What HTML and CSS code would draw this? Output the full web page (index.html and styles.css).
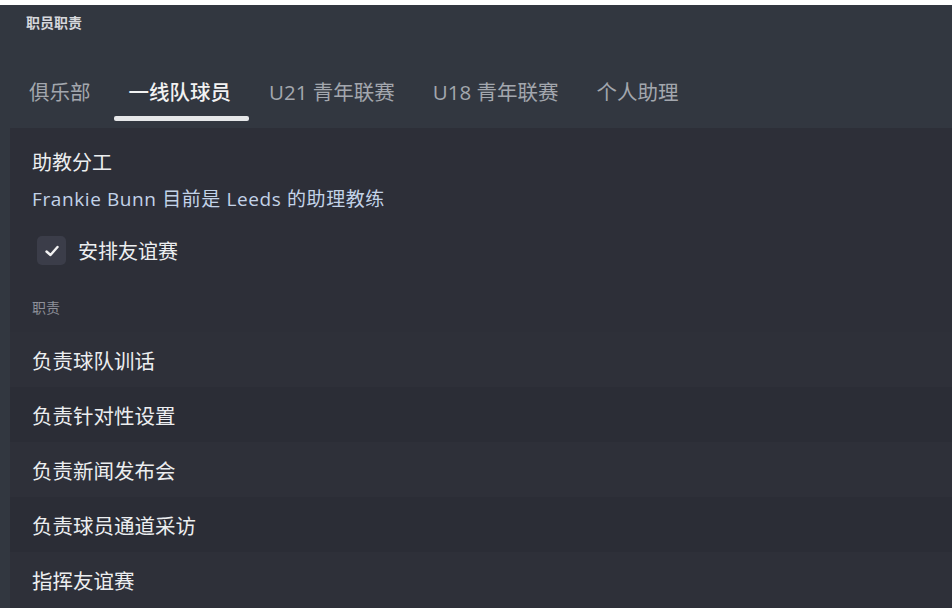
FILE: index.html
```html
<!DOCTYPE html>
<html lang="zh-CN">
<head>
    <meta charset="UTF-8">
    <meta name="viewport" content="width=device-width, initial-scale=1.0">
    <title>职员职责</title>
    <link rel="stylesheet" href="styles.css">
</head>
<body>
    <div class="top-strip"></div>
    <div class="app">
        <header class="header">
            <div class="page-title">职员职责</div>
            <nav class="tabs">
                <div class="tab">俱乐部</div>
                <div class="tab active">一线队球员</div>
                <div class="tab">U21 青年联赛</div>
                <div class="tab">U18 青年联赛</div>
                <div class="tab">个人助理</div>
            </nav>
        </header>

        <main class="panel">
            <section class="assign">
                <h2 class="assign-title">助教分工</h2>
                <p class="assign-info">Frankie Bunn 目前是 Leeds 的助理教练</p>
                <label class="check-row">
                    <span class="checkbox">
                        <svg width="18" height="18" viewBox="0 0 18 18">
                            <path d="M3.5 9.5 L7.5 13 L14.5 5" fill="none" stroke="#f2f2f2" stroke-width="2.4" stroke-linecap="round" stroke-linejoin="round"/>
                        </svg>
                    </span>
                    <span>安排友谊赛</span>
                </label>
            </section>

            <div class="section-label">职责</div>
            <ul class="duties">
                <li>负责球队训话</li>
                <li>负责针对性设置</li>
                <li>负责新闻发布会</li>
                <li>负责球员通道采访</li>
                <li>指挥友谊赛</li>
            </ul>
        </main>
    </div>
</body>
</html>
```

FILE: styles.css
```css
* {
    box-sizing: border-box;
}
body {
    margin: 0;
    background-color: #ffffff;
    font-family: "Open Sans", "Noto Sans CJK SC", sans-serif;
    color: #e4e5e8;
    height: 608px;
    overflow: hidden;
}
.top-strip {
    height: 5px;
    background: #ffffff;
}
.app {
    background-color: #323740;
    height: 603px;
    display: flex;
    flex-direction: column;
}
.header {
    height: 123px;
    display: flex;
    flex-direction: column;
}
.page-title {
    font-family: "Noto Sans CJK SC", sans-serif;
    font-size: 14px;
    font-weight: bold;
    color: #d6d8dc;
    padding: 7px 0 0 26px;
    height: 55px;
}
.tabs {
    display: flex;
    padding-left: 10px;
    height: 68px;
}
.tab {
    position: relative;
    padding: 16px 19px 0;
    font-size: 20.5px;
    color: #a3a7ae;
}
.tab.active {
    color: #f2f2f2;
    font-weight: 500;
}
.tab.active::after {
    content: "";
    position: absolute;
    left: 4px;
    right: 1px;
    bottom: 7px;
    height: 5px;
    border-radius: 2px;
    background: #e6e7e9;
}
.panel {
    flex: 1;
    margin-left: 10px;
    background-color: #2d2f38;
    padding-top: 21px;
}
.assign {
    padding-left: 22px;
}
.assign-title {
    margin: 0;
    font-size: 20px;
    font-weight: normal;
    color: #eceef0;
    line-height: 28px;
}
.assign-info {
    margin: 9px 0 0;
    font-size: 19px;
    letter-spacing: 0.6px;
    line-height: 26px;
    color: #c3d3e8;
}
.check-row {
    display: flex;
    align-items: center;
    gap: 12px;
    margin: 24px 0 0 5px;
    font-size: 20px;
    color: #eceef0;
}
.checkbox {
    width: 29px;
    height: 29px;
    border-radius: 5px;
    background: #3b3d49;
    display: flex;
    align-items: center;
    justify-content: center;
}
.section-label {
    padding: 33px 0 0 22px;
    font-size: 14px;
    line-height: 20px;
    color: #8d9099;
    height: 67px;
}
.duties {
    list-style: none;
    margin: 0;
    padding: 0;
}
.duties li {
    height: 55px;
    display: flex;
    align-items: center;
    padding-left: 22px;
    font-size: 20.5px;
    color: #eceef0;
}
.duties li:nth-child(odd) {
    background: #2e3039;
}
.duties li:nth-child(even) {
    background: #2b2d36;
}
```
